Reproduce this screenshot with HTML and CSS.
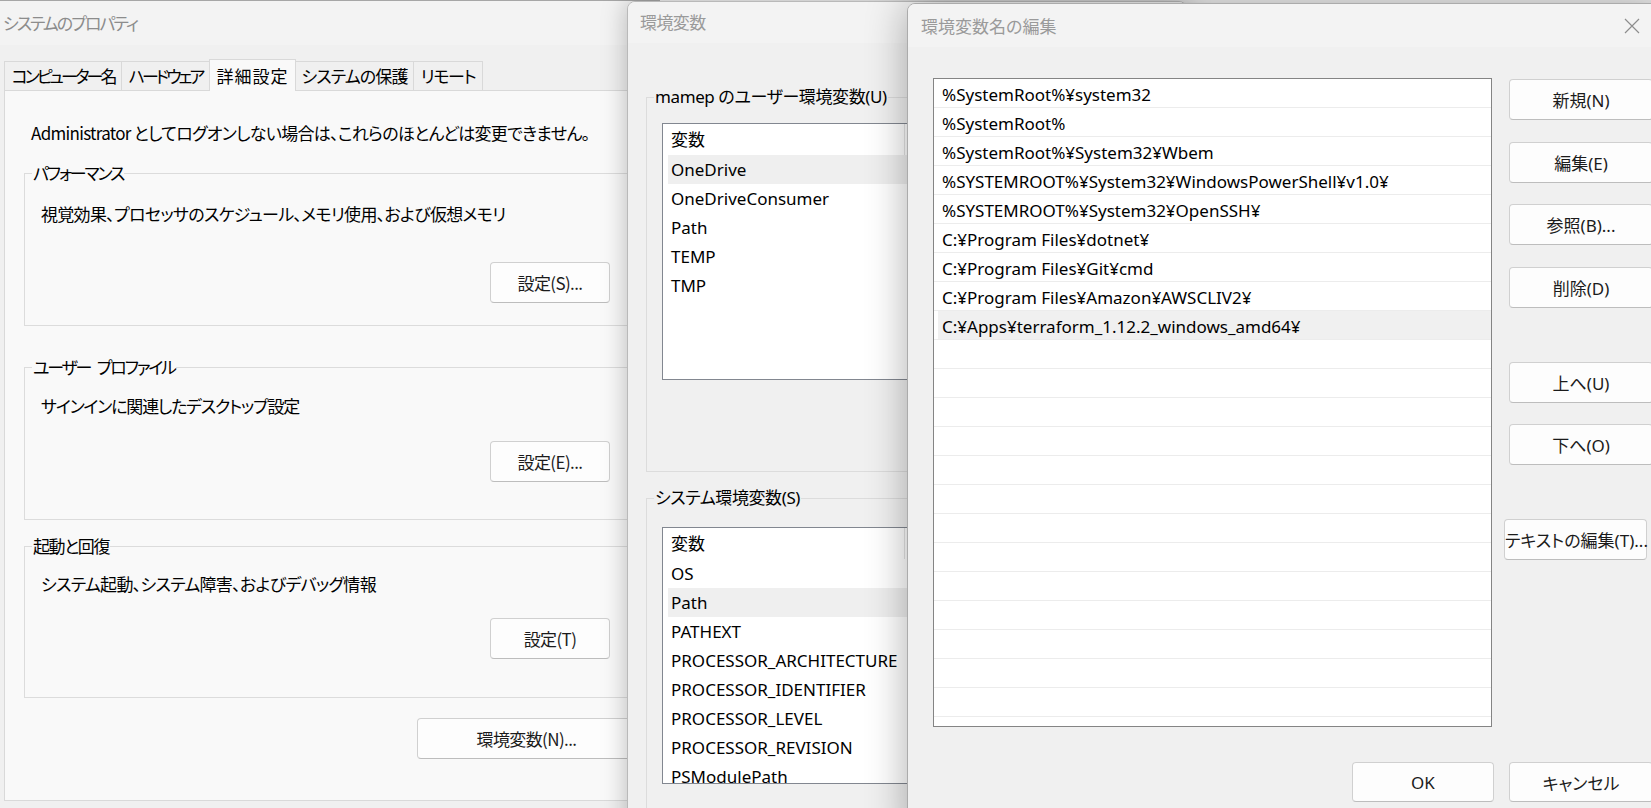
FILE: index.html
```html
<!DOCTYPE html>
<html lang="ja">
<head>
<meta charset="utf-8">
<title>環境変数名の編集</title>
<link rel="stylesheet" href="styles.css">
</head>
<body>
<div class="desk">

  <section class="win w1">
    <div class="tb1">システムのプロパティ</div>
    <div class="tabs">
      <div class="tab t1">コンピューター名</div>
      <div class="tab t2">ハードウェア</div>
      <div class="tab t3 sel">詳細設定</div>
      <div class="tab t4">システムの保護</div>
      <div class="tab t5">リモート</div>
    </div>
    <div class="panel">
      <div class="note">Administrator としてログオンしない場合は、これらのほとんどは変更できません。</div>
      <fieldset class="grp g1">
        <legend>パフォーマンス</legend>
        <div class="gtext">視覚効果、プロセッサのスケジュール、メモリ使用、および仮想メモリ</div>
        <div class="brow"><button class="btn b1">設定(S)...</button></div>
      </fieldset>
      <fieldset class="grp g2">
        <legend>ユーザー プロファイル</legend>
        <div class="gtext">サインインに関連したデスクトップ設定</div>
        <div class="brow"><button class="btn b1">設定(E)...</button></div>
      </fieldset>
      <fieldset class="grp g3">
        <legend class="kanji">起動と回復</legend>
        <div class="gtext">システム起動、システム障害、およびデバッグ情報</div>
        <div class="brow"><button class="btn b1">設定(T)</button></div>
      </fieldset>
      <div class="brow envrow"><button class="btn benv">環境変数(N)...</button></div>
    </div>
  </section>

  <section class="win w2">
    <div class="tb2">環境変数</div>
    <div class="body2">
      <fieldset class="grp2 u">
        <legend>mamep のユーザー環境変数(U)</legend>
        <div class="vlist">
          <div class="vhead">変数</div>
          <div class="vrow hl">OneDrive</div>
          <div class="vrow">OneDriveConsumer</div>
          <div class="vrow">Path</div>
          <div class="vrow">TEMP</div>
          <div class="vrow">TMP</div>
        </div>
      </fieldset>
      <fieldset class="grp2 s">
        <legend>システム環境変数(S)</legend>
        <div class="vlist">
          <div class="vhead">変数</div>
          <div class="vrow">OS</div>
          <div class="vrow hl">Path</div>
          <div class="vrow">PATHEXT</div>
          <div class="vrow">PROCESSOR_ARCHITECTURE</div>
          <div class="vrow">PROCESSOR_IDENTIFIER</div>
          <div class="vrow">PROCESSOR_LEVEL</div>
          <div class="vrow">PROCESSOR_REVISION</div>
          <div class="vrow">PSModulePath</div>
        </div>
      </fieldset>
    </div>
  </section>

  <section class="win w3">
    <div class="tb3">
      <span>環境変数名の編集</span>
      <span class="close" aria-label="閉じる">
        <svg width="16" height="16" viewBox="0 0 16 16"><path d="M1 1L15 15M15 1L1 15" stroke="#8d8d8d" stroke-width="1.2" fill="none"/></svg>
      </span>
    </div>
    <div class="body3">
      <div class="plist">
        <div class="prow">%SystemRoot%¥system32</div>
        <div class="prow">%SystemRoot%</div>
        <div class="prow">%SystemRoot%¥System32¥Wbem</div>
        <div class="prow">%SYSTEMROOT%¥System32¥WindowsPowerShell¥v1.0¥</div>
        <div class="prow">%SYSTEMROOT%¥System32¥OpenSSH¥</div>
        <div class="prow">C:¥Program Files¥dotnet¥</div>
        <div class="prow">C:¥Program Files¥Git¥cmd</div>
        <div class="prow">C:¥Program Files¥Amazon¥AWSCLIV2¥</div>
        <div class="prow sel">C:¥Apps¥terraform_1.12.2_windows_amd64¥</div>
        <div class="prow"></div><div class="prow"></div><div class="prow"></div>
        <div class="prow"></div><div class="prow"></div><div class="prow"></div>
        <div class="prow"></div><div class="prow"></div><div class="prow"></div>
        <div class="prow"></div><div class="prow"></div><div class="prow"></div>
        <div class="prow"></div><div class="prow"></div><div class="prow"></div>
      </div>
      <div class="side">
        <button class="btn b3">新規(N)</button>
        <button class="btn b3">編集(E)</button>
        <button class="btn b3">参照(B)...</button>
        <button class="btn b3">削除(D)</button>
        <button class="btn b3 sep">上へ(U)</button>
        <button class="btn b3">下へ(O)</button>
        <button class="btn b3 sep txt">テキストの編集(T)...</button>
      </div>
      <div class="foot">
        <button class="btn bok">OK</button>
        <button class="btn bcancel">キャンセル</button>
      </div>
    </div>
  </section>

</div>
</body>
</html>
```
FILE: styles.css
```css
* { box-sizing: border-box; }
html, body { margin: 0; padding: 0; }
body {
  width: 1651px;
  height: 808px;
  overflow: hidden;
  background: #f0f0f0;
  font-family: "Noto Sans", "Noto Sans CJK JP", sans-serif;
  font-feature-settings: "palt";
  font-size: 17px;
  color: #000;
}
.desk { position: relative; width: 1651px; height: 808px; overflow: hidden; }
.win { position: absolute; overflow: hidden; background: #f0f0f0; }

/* ---------- window 1 ---------- */
.w1 {
  left: 0; top: 0; width: 660px; height: 808px;
  border-top: 1px solid #a6a6a6;
  font-family: "Noto Sans CJK JP", sans-serif;
  z-index: 1;
}
.tb1 {
  height: 44px; line-height: 44px; background: #f3f3f3;
  padding-left: 3px; color: #8c8c8c; font-size: 17px; letter-spacing: -2px;
}
.tabs { display: flex; align-items: flex-start; margin: 16px 0 0 4px; height: 29px; }
.tab {
  height: 29px; line-height: 28px; padding: 0; text-align: center;
  border: 1px solid #d9d9d9; border-bottom: none; margin-right: -1px;
  background: #f0f0f0; font-size: 17px; white-space: nowrap;
}
.t1 { width: 118px; letter-spacing: -3px; }
.t2 { width: 89px; letter-spacing: -3px; }
.t3 { width: 87px; letter-spacing: 1px; }
.t4 { width: 119px; letter-spacing: -0.9px; }
.t5 { width: 70px; letter-spacing: -1.3px; }
.tab.sel {
  position: relative; z-index: 2; margin-top: -2px; height: 32px; padding-top: 2px;
  background: #f9f9f9;
}
.panel {
  margin-left: 4px; width: 652px; height: 711px;
  border: 1px solid #d9d9d9; background: #f9f9f9;
  padding: 30px 19px 0 19px;
}
.note { margin-left: 7px; line-height: 24px; height: 24px; white-space: nowrap; letter-spacing: -0.7px; }
.grp {
  margin: 0; min-width: 0; border: 1px solid #dcdcdc;
  padding: 0 25px 0 16px;
}
.grp legend { margin-left: -9px; padding: 0 1px; line-height: 24px; letter-spacing: -2.2px; word-spacing: 5px; white-space: pre; }
.grp legend.kanji { letter-spacing: -1.4px; }
.gtext { line-height: 24px; white-space: nowrap; letter-spacing: -0.7px; }
.g2 .gtext { letter-spacing: -1.2px; }
.brow { display: flex; justify-content: flex-end; }
.g1 { margin-top: 16px; padding-bottom: 22px; }
.g1 .gtext { margin-top: 17px; }
.g1 .brow { margin-top: 36px; }
.g2 { margin-top: 29px; padding-bottom: 37px; }
.g2 .gtext { margin-top: 15px; }
.g2 .brow { margin-top: 23px; }
.g3 { margin-top: 14px; padding-bottom: 38px; }
.g3 .gtext { margin-top: 14px; }
.g3 .brow { margin-top: 22px; }
.envrow { margin-top: 20px; }

.btn {
  font: inherit; color: #1b1b1b; background: #fdfdfd;
  border: 1px solid #d0d0d0; border-bottom-color: #bdbdbd; border-radius: 4px;
  height: 41px; padding: 0; white-space: nowrap; text-align: center;
}
.w1 .btn { letter-spacing: -0.6px; }
.b1 { width: 120px; }
.benv { width: 219px; }

/* ---------- window 2 ---------- */
.w2 {
  left: 627px; top: 1px; width: 560px; height: 840px;
  border: 1px solid #b9b9b9; border-radius: 8px 8px 0 0;
  box-shadow: 0 0 26px rgba(0,0,0,0.26);
  z-index: 2;
}
.tb2 { height: 41px; line-height: 41px; background: #f3f3f3; padding-left: 12px; color: #9a9a9a; letter-spacing: -0.6px; }
.body2 { padding: 42px 0 0 18px; }
.grp2 { margin: 0; min-width: 0; border: 1px solid #dcdcdc; padding: 0 0 0 15px; }
.grp2 legend { margin-left: -8px; padding: 0 1px; line-height: 24px; white-space: nowrap; letter-spacing: -0.4px; }
.grp2.u { padding-bottom: 91px; }
.grp2.s { margin-top: 14px; padding-bottom: 40px; }
.vlist {
  margin-top: 14px; width: 420px; height: 257px; overflow: hidden;
  border: 1px solid #828790; background: #fff;
}
.grp2.s .vlist { margin-top: 17px; }
.vhead {
  width: 242px; height: 31px; line-height: 31px; padding-left: 8px;
  border-right: 1px solid #e3e3e3;
}
.vrow { margin-left: 5px; padding-left: 3px; height: 29px; line-height: 29px; white-space: nowrap; }
.vrow.hl { background: #efefef; }

/* ---------- window 3 ---------- */
.w3 {
  left: 907px; top: 3px; width: 761px; height: 840px;
  border: 1px solid #ababab; border-radius: 8px 8px 0 0;
  box-shadow: 0 0 42px rgba(0,0,0,0.32);
  z-index: 3;
}
.tb3 {
  display: flex; align-items: center; height: 43px; background: #f3f3f3;
  padding-left: 13px; color: #9a9a9a;
}
.close { margin-left: auto; width: 70px; height: 43px; display: flex; align-items: center; justify-content: center; }
.body3 {
  display: grid; grid-template-columns: 559px 144px; column-gap: 17px;
  padding: 31px 14px 0 25px;
}
.plist {
  height: 649px; overflow: hidden; background: #fff; border: 1px solid #848484;
}
.prow {
  height: 29px; line-height: 26px; padding: 3px 0 0 8px;
  border-bottom: 1px solid #ececec; white-space: nowrap;
}
.prow.sel { background: linear-gradient(to right, transparent 4px, #f0f0f0 4px); }
.side { display: flex; flex-direction: column; gap: 21.5px; margin-top: 1px; }
.b3 { width: 144px; }
.sep { margin-top: 32.5px; }
.txt { width: 143px; margin-left: -5px; }
.foot { grid-column: 1 / -1; display: flex; justify-content: flex-end; gap: 15px; margin-top: 35px; }
.bok { width: 142px; height: 40px; }
.bcancel { width: 144px; height: 40px; }
```
